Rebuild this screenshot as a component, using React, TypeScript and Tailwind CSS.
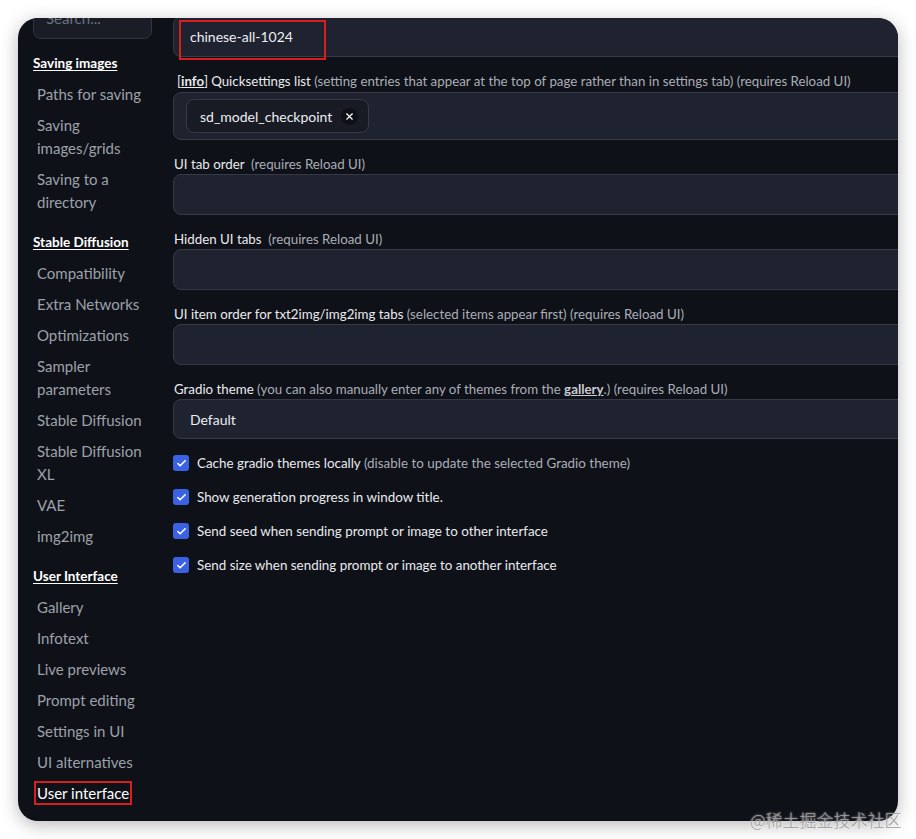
import { Check, X } from 'lucide-react';

const sections = [
  {
    title: 'Saving images',
    items: ['Paths for saving', 'Saving images/grids', 'Saving to a directory'],
  },
  {
    title: 'Stable Diffusion',
    items: [
      'Compatibility',
      'Extra Networks',
      'Optimizations',
      'Sampler parameters',
      'Stable Diffusion',
      'Stable Diffusion XL',
      'VAE',
      'img2img',
    ],
  },
  {
    title: 'User Interface',
    items: [
      'Gallery',
      'Infotext',
      'Live previews',
      'Prompt editing',
      'Settings in UI',
      'UI alternatives',
      'User interface',
    ],
  },
];

const checkboxes = [
  { label: 'Cache gradio themes locally', hint: '(disable to update the selected Gradio theme)' },
  { label: 'Show generation progress in window title.' },
  { label: 'Send seed when sending prompt or image to other interface' },
  { label: 'Send size when sending prompt or image to another interface' },
];

const Sidebar = () => (
  <aside className="w-[155px] shrink-0 pl-[15px] pr-[21px]">
    <div className="-mt-[20px] mb-[1px] flex h-[41px] w-[119px] items-center rounded-[8px] border border-[#30353f] bg-[#1a1d26] px-[12px] text-[15px] text-[#6b7280]">
      Search...
    </div>
    {sections.map((section) => (
      <div key={section.title} className="mt-[9px]">
        <div className="py-[4px] text-[13.5px] font-bold leading-[23px] text-white underline underline-offset-2">
          {section.title}
        </div>
        {section.items.map((item) => {
          const active = item === 'User interface';
          return (
            <div
              key={item}
              className={`py-[4px] pl-[4px] text-[15px] leading-[23px] ${active ? 'text-white' : 'text-[#9ca1aa]'}`}
            >
              {active ? (
                <span className="relative">
                  {item}
                  <span className="absolute -inset-x-[3px] -inset-y-[3px] border-2 border-[#d81e1e]" />
                </span>
              ) : (
                item
              )}
            </div>
          );
        })}
      </div>
    ))}
  </aside>
);

const Field = ({ children, className = '' }: { children?: React.ReactNode; className?: string }) => (
  <div
    className={`flex w-[760px] items-center rounded-[8px] border border-[#353a46] bg-[#1f2330] px-[16px] text-[14px] text-[#eceef2] ${className}`}
  >
    {children}
  </div>
);

const Label = ({ children }: { children: React.ReactNode }) => (
  <div className="mt-[14px] h-[20px] whitespace-nowrap px-[1px] text-[13.3px] leading-[20px] text-[#e9ebef]">
    {children}
  </div>
);

const Hint = ({ children }: { children: React.ReactNode }) => (
  <span className="text-[#a9aeb7]">{children}</span>
);

const Settings = () => (
  <main className="-mt-[2px] min-w-0 flex-1">
    <div className="relative">
      <Field className="h-[41px]">chinese-all-1024</Field>
      <span className="absolute left-[6px] top-[4px] h-[40px] w-[147px] border-2 border-[#d81e1e]" />
    </div>

    <Label>
      <span className="px-[3px]">
        [<span className="font-bold underline">info</span>]
      </span>
      Quicksettings list{' '}
      <Hint>(setting entries that appear at the top of page rather than in settings tab) (requires Reload UI)</Hint>
    </Label>
    <Field className="mt-[1px] h-[48px] !px-[12px]">
      <div className="flex h-[34px] items-center gap-[9px] rounded-[8px] border border-[#353a46] bg-[#181b24] pl-[13px] pr-[10px]">
        sd_model_checkpoint
        <span className="flex h-[17px] w-[17px] items-center justify-center rounded-full bg-[#0e1016]">
          <X size={11} strokeWidth={2.5} className="text-white" />
        </span>
      </div>
    </Field>

    <Label>
      UI tab order&nbsp; <Hint>(requires Reload UI)</Hint>
    </Label>
    <Field className="h-[41px]" />

    <Label>
      Hidden UI tabs&nbsp; <Hint>(requires Reload UI)</Hint>
    </Label>
    <Field className="h-[41px]" />

    <Label>
      UI item order for txt2img/img2img tabs <Hint>(selected items appear first) (requires Reload UI)</Hint>
    </Label>
    <Field className="h-[41px]" />

    <Label>
      Gradio theme{' '}
      <Hint>
        (you can also manually enter any of themes from the{' '}
        <span className="font-bold text-[#c9ccd2] underline">gallery</span>.) (requires Reload UI)
      </Hint>
    </Label>
    <Field className="h-[40px]">Default</Field>

    <div className="mt-[14px] flex flex-col gap-[14px]">
      {checkboxes.map((c) => (
        <div key={c.label} className="flex h-[20px] items-center gap-[8px] text-[13.4px] text-[#e9ebef]">
          <span className="flex h-[16px] w-[16px] items-center justify-center rounded-[3px] bg-[#3c62e4]">
            <Check size={11} strokeWidth={3.5} className="text-white" />
          </span>
          <span>
            {c.label} {c.hint && <Hint>{c.hint}</Hint>}
          </span>
        </div>
      ))}
    </div>
  </main>
);

export default function App() {
  return (
    <div className="relative h-[839px] overflow-hidden bg-white pt-[18px] font-['Lato','Noto_Sans',sans-serif]">
      <div className="mx-[18px] flex h-[803px] overflow-hidden rounded-[20px] bg-[#0f1118] shadow-[0_4px_18px_rgba(0,0,0,0.28)]">
        <Sidebar />
        <Settings />
      </div>
      <div className="absolute left-[750px] top-[808px] whitespace-nowrap font-['Noto_Sans_CJK_SC',sans-serif] text-[17px] font-light leading-[24px] text-[#9a9a9a] [text-shadow:0_0_2px_rgba(255,255,255,0.8)]">
        @稀土掘金技术社区
      </div>
    </div>
  );
}
